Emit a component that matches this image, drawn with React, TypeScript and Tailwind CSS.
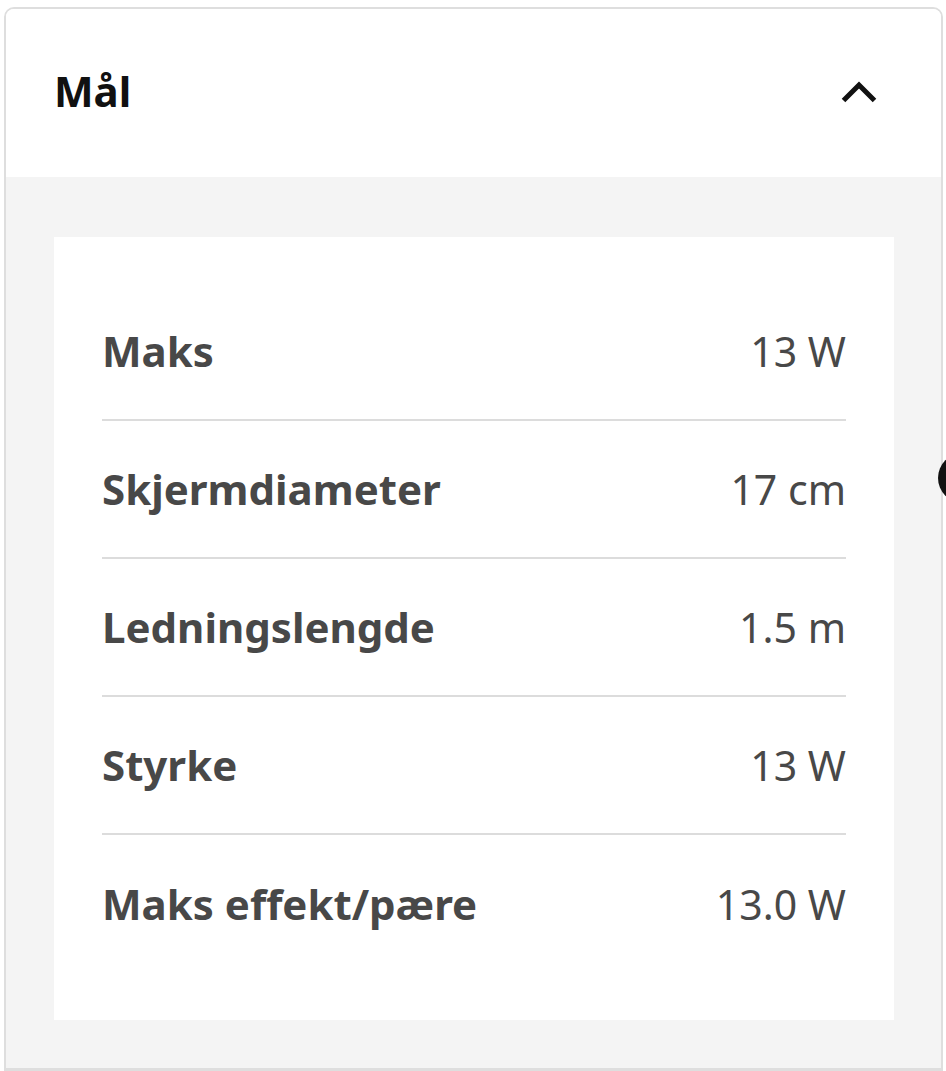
const specs = [
  { label: 'Maks', value: '13 W' },
  { label: 'Skjermdiameter', value: '17 cm' },
  { label: 'Ledningslengde', value: '1.5 m' },
  { label: 'Styrke', value: '13 W' },
  { label: 'Maks effekt/pære', value: '13.0 W' },
];

const App = () => {
  return (
    <div className="relative min-h-screen bg-white pt-[7px] pl-[4px] pr-[3px] font-['Noto_Sans',sans-serif]">
      <div className="h-[1064px] rounded-t-[10px] border-[2px] border-b-[3px] border-[#dedede] overflow-hidden flex flex-col">
        {/* Header */}
        <div className="h-[168px] shrink-0 bg-white flex items-center justify-between pl-[48px] pr-[64px] pb-[4px]">
          <h2 className="text-[42px] font-bold text-[#111111] leading-none">Mål</h2>
          <svg width="36" height="22" viewBox="0 0 36 22" fill="none" className="mt-[2px]">
            <path d="M2.5 19.5 L18 4 L33.5 19.5" stroke="#111111" strokeWidth="5" />
          </svg>
        </div>

        {/* Body */}
        <div className="flex-1 bg-[#f4f4f4] pt-[60px] pb-[46px] pl-[48px] pr-[47px]">
          <div className="bg-white pt-[46px] pb-[47px] px-[48px]">
            {specs.map((spec, i) => (
              <div
                key={spec.label}
                className={`h-[138px] flex items-center justify-between ${
                  i < specs.length - 1 ? 'border-b-2 border-[#dcdcdc]' : ''
                }`}
              >
                <span className="text-[42px] font-bold text-[#484848] leading-none">{spec.label}</span>
                <span className="text-[41px] text-[#484848] leading-none">{spec.value}</span>
              </div>
            ))}
          </div>
        </div>
      </div>

      {/* partial floating circle at the right edge */}
      <div className="absolute left-[938px] top-[453px] w-[50px] h-[50px] rounded-full bg-[#111111]" />
    </div>
  );
};

export default App;
